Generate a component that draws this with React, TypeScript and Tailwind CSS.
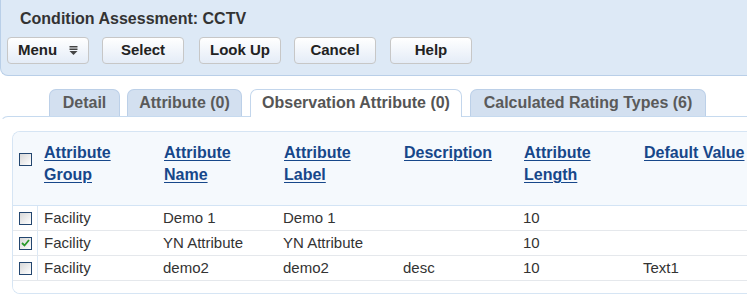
import React from "react";

const font = { fontFamily: '"Liberation Sans", Arial, sans-serif' };

function Btn({ children, menu }: { children: React.ReactNode; menu?: boolean }) {
  return (
    <div className="flex h-[27px] w-[82px] items-center justify-center rounded-[4px] border border-[#c7c7c7] bg-gradient-to-b from-[#ffffff] to-[#e4ecf7] text-[15px] font-bold text-[#222]">
      {menu ? (
        <div className="flex w-full items-center justify-between pl-[10px] pr-[10px]">
          <span>{children}</span>
          <svg width="9" height="9" viewBox="0 0 9 9">
            <rect x="0.5" y="0" width="8" height="1.5" fill="#444" />
            <rect x="0.5" y="2.5" width="8" height="1.5" fill="#444" />
            <polygon points="0.5,5 8.5,5 4.5,9" fill="#444" />
          </svg>
        </div>
      ) : (
        children
      )}
    </div>
  );
}

function Tab({ label, width, active, ml }: { label: string; width: number; active?: boolean; ml: number }) {
  return (
    <div
      style={{ width, marginLeft: ml }}
      className={
        active
          ? "relative z-10 -mb-px flex h-[28px] items-center justify-center rounded-t-[7px] border border-b-0 border-[#c3d6ec] bg-white pb-[1px] text-[16px] font-bold text-[#555]"
          : "flex h-[27px] items-center justify-center rounded-t-[7px] border border-b-0 border-[#bcd0e8] bg-[#d3e0f0] text-[16px] font-bold text-[#5a5a5a]"
      }
    >
      {label}
    </div>
  );
}

function Check({ checked }: { checked?: boolean }) {
  return (
    <div className="flex h-[13px] w-[13px] items-center justify-center border border-[#23466f] bg-gradient-to-br from-[#d8d8d8] to-[#ffffff]">
      {checked && (
        <svg width="9" height="8" viewBox="0 0 9 8">
          <path d="M1 4 L3.5 6.5 L8 1" stroke="#2c9a2c" strokeWidth="1.8" fill="none" />
        </svg>
      )}
    </div>
  );
}

const headers = [
  ["Attribute", "Group"],
  ["Attribute", "Name"],
  ["Attribute", "Label"],
  ["Description"],
  ["Attribute", "Length"],
  ["Default Value"],
];

const rows = [
  { checked: false, cells: ["Facility", "Demo 1", "Demo 1", "", "10", ""] },
  { checked: true, cells: ["Facility", "YN Attribute", "YN Attribute", "", "10", ""] },
  { checked: false, cells: ["Facility", "demo2", "demo2", "desc", "10", "Text1"] },
];

export default function App() {
  return (
    <div style={font} className="h-[296px] w-[747px] overflow-hidden bg-white">
      <div className="h-[76px] rounded-bl-[8px] border-b border-l border-[#b9cfe8] bg-[#dde9f6]">
        <div className="pl-[19px] pt-[10px] text-[16px] font-bold leading-[18px] text-[#333]">
          Condition Assessment: CCTV
        </div>
        <div className="mt-[9px] flex pl-[6px]">
          <div className="mr-[13px]"><Btn menu>Menu</Btn></div>
          <div className="mr-[15px]"><Btn>Select</Btn></div>
          <div className="mr-[13px]"><Btn>Look Up</Btn></div>
          <div className="mr-[14px]"><Btn>Cancel</Btn></div>
          <Btn>Help</Btn>
        </div>
      </div>

      <div className="mt-[13px] flex h-[27px] items-end">
        <Tab label="Detail" width={71} ml={49} />
        <Tab label="Attribute (0)" width={115} ml={7} />
        <Tab label="Observation Attribute (0)" width={212} ml={8} active />
        <Tab label="Calculated Rating Types (6)" width={236} ml={8} />
      </div>

      <div className="rounded-tl-[8px] border-l border-t border-[#c6daef] border-l-transparent pl-[11px] pt-[14px]">
        <div className="w-[780px] overflow-hidden rounded-l-[8px] border border-r-0 border-[#d6e5f4]">
          <div className="flex h-[74px] border-b border-[#d3e4f5] bg-[#f5f9fd]">
            <div className="w-[25px] shrink-0 pl-[6px] pt-[21px]">
              <Check />
            </div>
            {headers.map((h, i) => (
              <div key={i} className="w-[120px] shrink-0 pl-[6px] pt-[10px] text-[16px] font-bold leading-[22px] text-[#17478a]">
                {h.map((l, j) => (
                  <div key={j}>
                    <span className="underline decoration-[1px] underline-offset-[2px]">{l}</span>
                  </div>
                ))}
              </div>
            ))}
          </div>
          {rows.map((r, i) => (
            <div key={i} className="flex h-[25px] border-b border-[#e5e8ec] bg-white">
              <div className="flex w-[25px] shrink-0 items-center border-r border-[#dbe8f5] pl-[6px]">
                <Check checked={r.checked} />
              </div>
              {r.cells.map((c, j) => (
                <div
                  key={j}
                  className={(j === 0 ? "w-[119px] " : "w-[120px] ") + "flex shrink-0 items-center pl-[6px] text-[15px] text-[#333]"}
                >
                  {c}
                </div>
              ))}
            </div>
          ))}
          <div className="h-[12px] bg-white" />
        </div>
      </div>
    </div>
  );
}
